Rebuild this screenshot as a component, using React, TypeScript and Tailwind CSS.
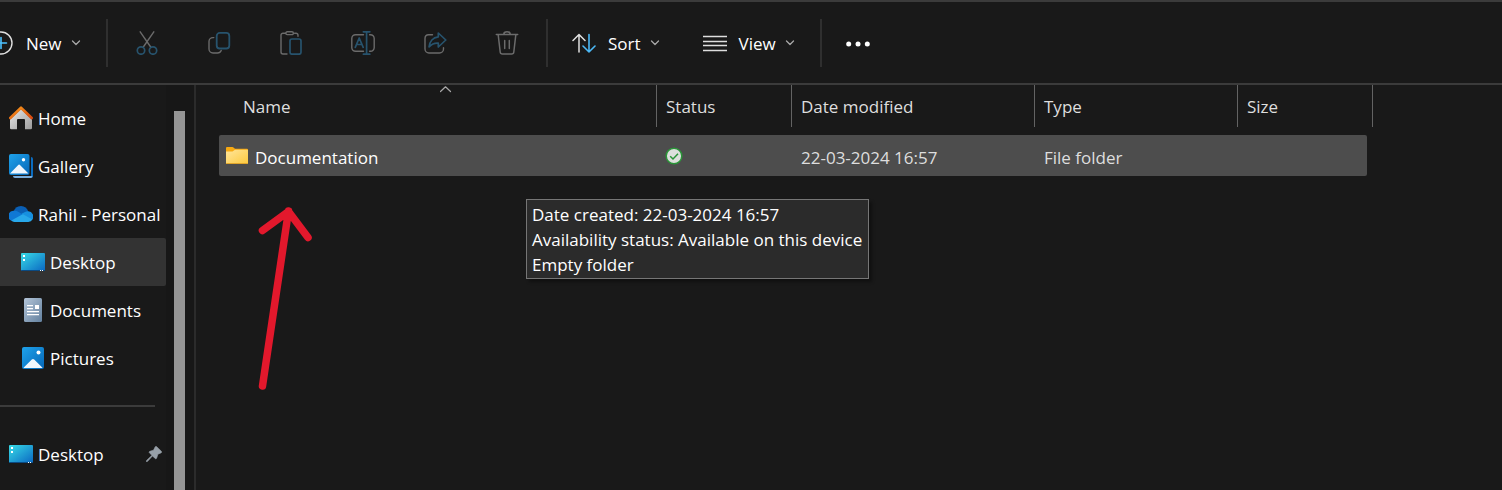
import React from "react";

const GRAY = "#6b6b6b";
const BLUE = "#27536d";

type GlyphProps = { children: React.ReactNode; className?: string; viewBox?: string };

function Glyph({ children, className = "h-6 w-6", viewBox = "0 0 24 24" }: GlyphProps) {
  return (
    <svg
      viewBox={viewBox}
      className={`shrink-0 ${className}`}
      fill="none"
      strokeWidth="1.4"
      strokeLinecap="round"
      strokeLinejoin="round"
      aria-hidden="true"
    >
      {children}
    </svg>
  );
}

function Chevron() {
  return (
    <Glyph className="h-2 w-2.5" viewBox="0 0 10 8">
      <path d="M1.5 2 5 5.500 8.500 2" stroke="#a8a8a8" strokeWidth="1.300" />
    </Glyph>
  );
}

function CutIcon() {
  return (
    <Glyph>
      <path d="M5.2.8 15.7 16M18.8.8 8.3 16" stroke={GRAY} />
      <circle cx="6" cy="19.5" r="3.7" stroke={BLUE} strokeWidth="1.7" />
      <circle cx="18" cy="19.5" r="3.7" stroke={BLUE} strokeWidth="1.7" />
    </Glyph>
  );
}

function CopyIcon() {
  return (
    <Glyph>
      <path d="M6.8 6.6H6a4 4 0 0 0-4 4V18a4 4 0 0 0 4 4h4.5a4 4 0 0 0 3.7-2.5" stroke={GRAY} />
      <rect x="9.7" y="1.9" width="12.6" height="15.6" rx="3" stroke={BLUE} strokeWidth="1.8" />
    </Glyph>
  );
}

function PasteIcon() {
  return (
    <Glyph>
      <path d="M6.5 2.2H4a2 2 0 0 0-2 2V21a2 2 0 0 0 2 2h4M15.5 2.2H17a2 2 0 0 1 2 2v1" stroke={GRAY} />
      <rect x="6.8" y="0.8" width="7.6" height="2.8" rx="1.4" stroke={GRAY} />
      <rect x="11" y="8" width="11" height="15.2" rx="2" stroke={BLUE} strokeWidth="1.7" />
    </Glyph>
  );
}

function RenameIcon() {
  return (
    <Glyph>
      <path d="M12.5 3.7H4.5a3.7 3.7 0 0 0-3.7 3.7v9.2a3.7 3.7 0 0 0 3.7 3.7h8M18.6 3.7h.9a3.7 3.7 0 0 1 3.7 3.7v9.2a3.7 3.7 0 0 1-3.7 3.7h-.9" stroke={GRAY} />
      <path d="M4.3 16.3 8.2 7l4 9.3M5.6 13.5h5.3M15.6.8v22.4M12.4.8h6.4M12.4 23.2h6.4" stroke={BLUE} strokeWidth="1.7" />
    </Glyph>
  );
}

function ShareIcon() {
  return (
    <Glyph>
      <path d="M9.5 3.8H5.6A3.7 3.7 0 0 0 2 7.5V18a4 4 0 0 0 4 4h10.5a4 4 0 0 0 4-4v-1.2" stroke={GRAY} />
      <path d="M15.3 2 22.8 9l-7.5 7v-3.8c-3.6-.3-6.600.9-9.200 3.600.5-5.200 3.900-9.300 9.200-9.900z" stroke={BLUE} strokeWidth="1.7" />
    </Glyph>
  );
}

function DeleteIcon() {
  return (
    <Glyph>
      <path d="M1.3 3.5h21.4M8.800 3.300a3.200 2.500 0 0 1 6.400 0M3.200 3.800l2 17.200a2.200 2.200 0 0 0 2.200 2h9.200a2.200 2.200 0 0 0 2.200-2l2-17.200M9.700 9.500v8M14.300 9.500v8" stroke={GRAY} strokeWidth="1.5" />
    </Glyph>
  );
}

function SortIcon() {
  return (
    <Glyph>
      <path d="M7 21V3.500M1 9.500l6-6 6 6" stroke="#e0e0e0" strokeWidth="1.5" />
      <path d="M17 3.500V21M11 15l6 6 6-6" stroke="#4cb8f5" strokeWidth="1.6" />
    </Glyph>
  );
}

function ViewIcon() {
  return (
    <Glyph>
      <path d="M0 5.500h24M0 10.500h24M0 14.500h24M0 19.500h24" stroke="#dedede" strokeWidth="1.3" strokeLinecap="butt" />
    </Glyph>
  );
}

function HomeIcon() {
  return (
    <Glyph>
      <defs>
        <linearGradient id="home-wall" x1="0" y1="0" x2="1" y2="1">
          <stop offset="0" stopColor="#e9e9e9" />
          <stop offset="1" stopColor="#9b9b9b" />
        </linearGradient>
        <linearGradient id="home-roof" x1="0" y1="0" x2="1" y2="1">
          <stop offset="0" stopColor="#f99a1c" />
          <stop offset="1" stopColor="#d9480f" />
        </linearGradient>
      </defs>
      <path d="M12 3 23 13.500V22a1.200 1.200 0 0 1-1.200 1.200H16V14a1 1 0 0 0-1-1H9a1 1 0 0 0-1 1v9.200H2.200A1.200 1.200 0 0 1 1 22v-8.500z" fill="url(#home-wall)" />
      <path d="M1.300 12 12 1.700 22.700 12" stroke="url(#home-roof)" strokeWidth="2.6" />
    </Glyph>
  );
}

function GalleryIcon() {
  return (
    <Glyph>
      <defs>
        <linearGradient id="gallery-sky" x1="0" y1="0" x2="1" y2="1">
          <stop offset="0" stopColor="#1fa2ea" />
          <stop offset="1" stopColor="#0567b8" />
        </linearGradient>
      </defs>
      <path d="M22 3a2 2 0 0 1 2 2v17a2 2 0 0 1-2 2z" fill="#0a6cc0" />
      <path d="M4 22h19.500a2 2 0 0 1-1.500 2H6a2 2 0 0 1-2-2z" fill="#79aede" />
      <rect width="20.500" height="21" rx="2" fill="url(#gallery-sky)" />
      <path d="M1 19.500 9 11.200a1.500 1.500 0 0 1 2.200 0l8.300 8.300z" fill="#eef6fd" />
      <circle cx="14.500" cy="5.700" r="1.700" fill="#fff" />
    </Glyph>
  );
}

function CloudIcon() {
  return (
    <Glyph className="h-4 w-6" viewBox="0 0 24 16">
      <path d="M4.500 6A8 8 0 0 1 12 0a8 8 0 0 1 7.300 5.500L15 11H8z" fill="#0a5fb4" />
      <path d="M2.800 15A5.300 5.300 0 0 1 5.500 4.800a7 7 0 0 1 4 1.100L17 10.500 8 16z" fill="#0f78d4" />
      <path d="M12.500 7.800 16 5.900a7 7 0 0 1 3.300-.600 5.300 5.300 0 0 1 4.200 8.200L17 13z" fill="#1790df" />
      <path d="M2.300 14.600 12.300 9c1-.600 2-.600 3 0l8.200 4.600A4.800 4.800 0 0 1 19.300 16H5.500a5.300 5.300 0 0 1-3.200-1.400z" fill="#28a8ea" />
    </Glyph>
  );
}

function DesktopIcon() {
  return (
    <Glyph className="h-[18px] w-6" viewBox="0 0 24 18">
      <defs>
        <linearGradient id="desktop-screen" x1="0" y1="0" x2="1" y2="1">
          <stop offset="0" stopColor="#38dbe6" />
          <stop offset="1" stopColor="#0a67c2" />
        </linearGradient>
      </defs>
      <rect width="24" height="18" rx="1" fill="url(#desktop-screen)" />
      <path d="M0 17h24v.300a.700.700 0 0 1-.700.700H.700A.700.700 0 0 1 0 17.300z" fill="#0b4a82" />
      <path d="M2 2h2v2H2zM2 6h2v2H2zM19 17h1v1h-1zM21 17h1v1h-1z" fill="#fff" />
    </Glyph>
  );
}

function DocumentsIcon() {
  return (
    <Glyph>
      <defs>
        <linearGradient id="doc-page" x1="0" y1="0" x2="1" y2="1">
          <stop offset="0" stopColor="#b4c5d8" />
          <stop offset="1" stopColor="#63819f" />
        </linearGradient>
      </defs>
      <rect x="3" width="18" height="24" rx="1.500" fill="url(#doc-page)" />
      <path d="M6 7h6v1.200H6zM6 10h6v1.200H6zM6 13h12v1.200H6zM6 16h12v1.200H6zM14 7h4v4h-4z" fill="#fff" />
    </Glyph>
  );
}

function PicturesIcon() {
  return (
    <Glyph>
      <defs>
        <linearGradient id="pic-sky" x1="0" y1="0" x2="1" y2="1">
          <stop offset="0" stopColor="#1fa2ea" />
          <stop offset="1" stopColor="#0567b8" />
        </linearGradient>
      </defs>
      <rect x="1" y="1" width="22" height="22" rx="2" fill="url(#pic-sky)" />
      <path d="M2.500 21.800 10.800 13.500a1.700 1.700 0 0 1 2.400 0l8.300 8.300a2 2 0 0 1-1 .200h-17a2 2 0 0 1-1-.200z" fill="#f0f7fd" />
      <circle cx="17.500" cy="6.500" r="2" fill="#fff" />
    </Glyph>
  );
}

function PinIcon() {
  return (
    <Glyph className="h-4 w-4" viewBox="0 0 16 16">
      <path d="M9.300.700a1 1 0 0 1 1.400 0l4.600 4.500a1 1 0 0 1-.400 1.700l-3 1.300-1.200 3.800a1 1 0 0 1-1.700.400L6.500 9.900 1.400 15.500.300 15.700.500 14.600 6 9.300 3.500 7a1 1 0 0 1 .400-1.700l3.500-1.100z" fill="#97a0a8" stroke="#97a0a8" strokeWidth="0.6" />
    </Glyph>
  );
}

function FolderIcon() {
  return (
    <Glyph className="h-[18px] w-[22px]" viewBox="0 0 22 18">
      <defs>
        <linearGradient id="folder-front" x1="0" y1="0" x2="1" y2="1">
          <stop offset="0" stopColor="#ffe59b" />
          <stop offset="1" stopColor="#fcc93d" />
        </linearGradient>
      </defs>
      <path d="M0 1a1 1 0 0 1 1-1h5.500a1.500 1.500 0 0 1 1 .400L9 1.800h12a1 1 0 0 1 1 1V8H0z" fill="#f6a912" />
      <path d="M0 4.500h6.500L9 2.800h12.500l.500.500V16a1 1 0 0 1-1 1H1a1 1 0 0 1-1-1z" fill="url(#folder-front)" />
      <path d="M0 16h22a1 1 0 0 1-1 1H1a1 1 0 0 1-1-1z" fill="#e0a52b" />
    </Glyph>
  );
}

function SyncedIcon() {
  return (
    <svg viewBox="0 0 18 18" className="h-[18px] w-[18px]" fill="none" role="img" aria-label="Available on this device">
      <circle cx="9" cy="9" r="7.800" fill="#dcdfdc" stroke="#2a9438" strokeWidth="1.5" />
      <path d="M5.200 9.200 8 12l5-5.200" stroke="#2a9438" strokeWidth="1.5" />
    </svg>
  );
}

function Divider() {
  return <div className="h-12 w-0.5 shrink-0 bg-[#2f2f2f]" />;
}

const fileActions = [
  { label: "Cut", Icon: CutIcon },
  { label: "Copy", Icon: CopyIcon },
  { label: "Paste", Icon: PasteIcon },
  { label: "Rename", Icon: RenameIcon },
  { label: "Share", Icon: ShareIcon },
  { label: "Delete", Icon: DeleteIcon },
];

function Toolbar() {
  return (
    <header className="flex h-[85px] shrink-0 items-center border-y-2 border-[#3b3b3b] pt-px text-white">
      <button type="button" className="flex h-12 w-[106px] shrink-0 items-center">
        <Glyph className="h-6 w-[13px]" viewBox="11 0 13 24">
          <circle cx="12" cy="12" r="11" stroke="#e0e0e0" />
          <path d="M12 6.500v11M6.500 12h11" stroke="#4cc2ff" strokeWidth="1.6" />
        </Glyph>
        <span className="mr-[9px] ml-[13px] pt-0.5">New</span>
        <Chevron />
      </button>
      <Divider />
      <div className="mx-[3px] flex">
        {fileActions.map(({ label, Icon }) => (
          <button key={label} type="button" disabled aria-label={label} className="flex h-12 w-[72px] items-center justify-center">
            <Icon />
          </button>
        ))}
      </div>
      <Divider />
      <button type="button" className="ml-6 flex h-12 shrink-0 items-center">
        <SortIcon />
        <span className="mr-[9px] ml-3 pt-0.5">Sort</span>
        <Chevron />
      </button>
      <button type="button" className="mx-[43px] mr-[25px] flex h-12 shrink-0 items-center">
        <ViewIcon />
        <span className="mr-[9px] ml-3 pt-0.5">View</span>
        <Chevron />
      </button>
      <Divider />
      <button type="button" aria-label="See more" className="ml-6 flex h-12 items-center">
        <Glyph>
          <g fill="#fff">
            <circle cx="2.700" cy="13" r="2.500" />
            <circle cx="12" cy="13" r="2.500" />
            <circle cx="21.300" cy="13" r="2.500" />
          </g>
        </Glyph>
      </button>
    </header>
  );
}

const places = [
  { label: "Home", Icon: HomeIcon, nested: false, active: false },
  { label: "Gallery", Icon: GalleryIcon, nested: false, active: false },
  { label: "Rahil - Personal", Icon: CloudIcon, nested: false, active: false },
  { label: "Desktop", Icon: DesktopIcon, nested: true, active: true },
  { label: "Documents", Icon: DocumentsIcon, nested: true, active: false },
  { label: "Pictures", Icon: PicturesIcon, nested: true, active: false },
];

function Sidebar() {
  return (
    <aside className="flex w-[196px] shrink-0 border-r-2 border-[#2b2b2b]">
      <nav aria-label="Places" className="w-[166px] shrink-0 pt-[9px] text-white">
        <ul>
          {places.map(({ label, Icon, nested, active }) => (
            <li key={label}>
              <a
                href="#"
                aria-current={active ? "page" : undefined}
                className={`flex h-12 items-center gap-[5px] whitespace-nowrap ${nested ? "pl-[21px]" : "pl-[9px]"} ${active ? "rounded-r-xs bg-[#333333]" : ""}`}
              >
                <Icon />
                <span className="pt-0.5">{label}</span>
              </a>
            </li>
          ))}
        </ul>
        <hr className="mt-[23px] mr-[11px] border-t-2 border-[#3b3b3b]" />
        <a href="#" className="mt-[23px] flex h-12 items-center gap-[5px] pr-1 pl-[9px]">
          <DesktopIcon />
          <span className="flex-1 pt-0.5">Desktop</span>
          <PinIcon />
        </a>
      </nav>
      <div className="flex flex-1 bg-[#171717] pt-[26px] pl-2">
        <div className="w-[11px] bg-[#959595]" />
      </div>
    </aside>
  );
}

const headings = ["Status", "Date modified", "Type", "Size"];

function FileTable() {
  return (
    <table className="w-[1154px] table-fixed border-separate border-spacing-0 text-left text-[#dedede]">
      <colgroup>
        <col className="w-[438px]" />
        <col className="w-[135px]" />
        <col className="w-[243px]" />
        <col className="w-[203px]" />
        <col className="w-[135px]" />
      </colgroup>
      <thead>
        <tr className="h-[42px]">
          <th scope="col" aria-sort="ascending" className="relative border-r border-[#636363] pt-0.5 pl-6 font-normal">
            Name
            <Glyph className="absolute top-0 left-[221px] h-2 w-3" viewBox="0 0 12 8">
              <path d="M.500 6.500 5.500 1.800l5 4.700" stroke="#a8a8a8" strokeWidth="1.2" />
            </Glyph>
          </th>
          {headings.map((heading) => (
            <th key={heading} scope="col" className="border-r border-[#636363] pt-0.5 pl-[9px] font-normal">
              {heading}
            </th>
          ))}
        </tr>
      </thead>
      <tbody>
        <tr>
          <td className="p-0 pt-2">
            <div className="flex h-[41px] items-center gap-[7px] rounded-l-xs bg-[#4d4d4d] pt-1 pl-[7px] text-white">
              <div className="-mt-1">
                <FolderIcon />
              </div>
              Documentation
            </div>
          </td>
          <td className="p-0 pt-2">
            <div className="flex h-[41px] items-center bg-[#4d4d4d] pl-2">
              <SyncedIcon />
            </div>
          </td>
          <td className="p-0 pt-2">
            <div className="flex h-[41px] items-center bg-[#4d4d4d] pt-1 pl-[9px]">22-03-2024 16:57</div>
          </td>
          <td className="p-0 pt-2">
            <div className="flex h-[41px] items-center bg-[#4d4d4d] pt-1 pl-[9px]">File folder</div>
          </td>
          <td className="p-0 pt-2">
            <div className="mr-1.5 h-[41px] rounded-r-xs bg-[#4d4d4d]" />
          </td>
        </tr>
      </tbody>
    </table>
  );
}

export default function App() {
  return (
    <div className="flex h-screen flex-col overflow-hidden bg-[#191919] font-['Open_Sans','Noto_Sans',sans-serif] text-[17px] leading-6">
      <Toolbar />
      <div className="flex min-h-0 flex-1">
        <Sidebar />
        <main className="relative min-w-0 flex-1 overflow-hidden pl-[23px]">
          <FileTable />
          <svg className="absolute top-[115px] left-[54px] h-[200px] w-[70px]" viewBox="250 200 70 200" fill="none" aria-hidden="true">
            <path d="M262.500 386 288.500 211M262.500 230.500 288.500 211.500 308 237.500" stroke="#e2182c" strokeWidth="7.5" strokeLinecap="round" strokeLinejoin="round" />
          </svg>
          <div role="tooltip" className="absolute top-[114px] left-[330px] border border-[#767676] bg-[#2b2b2b] pt-0.5 pr-1.5 pb-px pl-[5px] leading-[25px] whitespace-nowrap text-white shadow-[3px_3px_3px_rgba(0,0,0,0.35)]">
            <p>Date created: 22-03-2024 16:57</p>
            <p>Availability status: Available on this device</p>
            <p>Empty folder</p>
          </div>
        </main>
      </div>
    </div>
  );
}
